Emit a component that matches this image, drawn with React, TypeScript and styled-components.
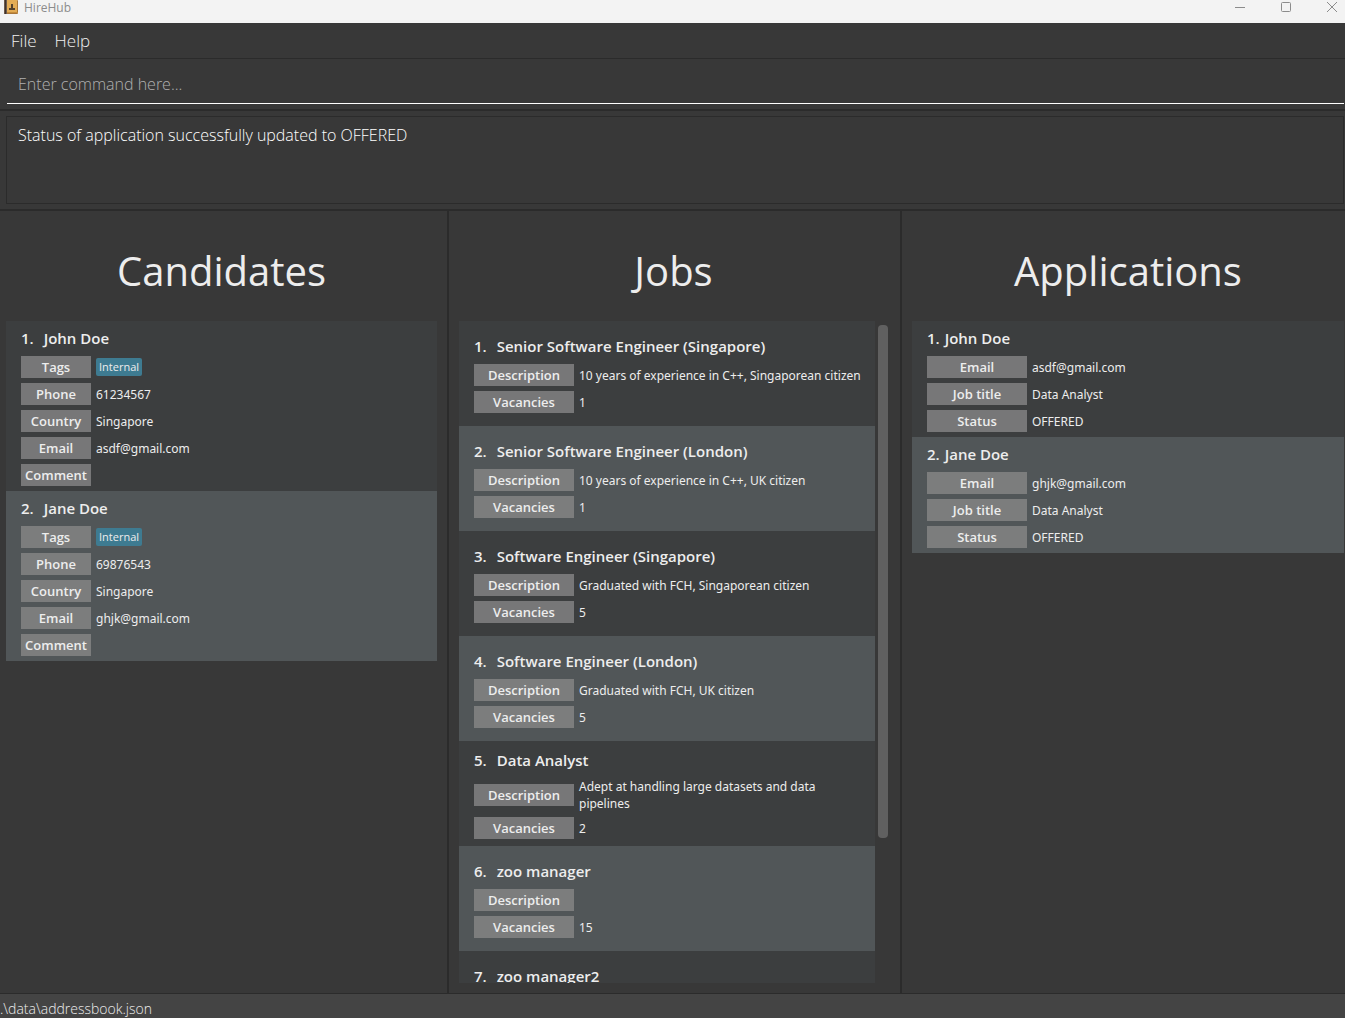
import React from "react";
import styled, { createGlobalStyle } from "styled-components";

const GlobalStyle = createGlobalStyle`
  *, *::before, *::after { box-sizing: border-box; }
  body { margin: 0; background: #383838; }
  button, input, textarea { font-family: inherit; }
`;

const Shell = styled.div`
  display: flex;
  flex-direction: column;
  height: 100vh;
  background: #383838;
  color: #ededed;
  font-family: "Open Sans", "Noto Sans", sans-serif;
`;

const TitleBar = styled.header`
  display: flex;
  align-items: flex-start;
  gap: 5px;
  flex: none;
  height: 23px;
  padding-left: 4px;
  background: #f3f3f3;
  color: #8c8c8c;
`;

const AppName = styled.span`
  flex: 1;
  font-size: 12px;
  line-height: 16px;
`;

const WindowButton = styled.button`
  display: flex;
  justify-content: center;
  width: 46px;
  height: 14px;
  padding: 0;
  border: 0;
  background: none;
  color: #8c8c8c;

  &:last-child { margin-right: -10px; }
`;

const WindowControls = styled.div`
  display: flex;
  overflow: hidden;
`;

const MenuBar = styled.nav`
  display: flex;
  flex: none;
  height: 36px;
  padding: 0 2px;
  border-bottom: 1px solid #2b2b2b;
`;

const MenuButton = styled.button`
  padding: 0 9px;
  border: 0;
  background: none;
  color: #f0f0f0;
  font-size: 17px;
  font-weight: 300;
  line-height: 35px;
`;

const CommandArea = styled.form`
  flex: none;
  padding: 6px 1px 5px 7px;
  border-bottom: 2px solid #2b2b2b;
`;

const CommandInput = styled.input`
  display: block;
  width: 100%;
  height: 39px;
  padding: 0 11px 1px;
  border: 0;
  border-bottom: 1px solid #ffffff;
  outline: 0;
  background: transparent;
  color: #ffffff;
  font-size: 16px;
  font-weight: 300;

  &::placeholder { color: #b0b0b0; opacity: 1; }
`;

const ResultArea = styled.section`
  flex: none;
  padding: 5px 1px 5px 6px;
  border-bottom: 2px solid #2b2b2b;
`;

const ResultText = styled.textarea`
  display: block;
  width: 100%;
  height: 88px;
  padding: 6px 11px;
  border: 1px solid #2b2b2b;
  outline: 0;
  resize: none;
  background: transparent;
  color: #ffffff;
  font-size: 16px;
  font-weight: 300;
  line-height: 24px;
`;

const Columns = styled.main`
  display: grid;
  grid-template-columns: 449fr 453fr 443fr;
  flex: 1;
  min-height: 0;
`;

const Column = styled.section<{ $inset: string }>`
  display: flex;
  flex-direction: column;
  min-width: 0;
  min-height: 0;
  padding: ${(p) => p.$inset};
  border-right: 2px solid #2b2b2b;

  &:last-child { border-right: 0; }
`;

const ColumnTitle = styled.h1`
  flex: none;
  margin: 0;
  height: 110px;
  font-size: 40px;
  font-weight: 400;
  line-height: 120px;
  text-align: center;
`;

const ScrollPane = styled.div`
  display: flex;
  gap: 3px;
  flex: 1;
  min-height: 0;
`;

const CardList = styled.ul`
  flex: 1;
  min-width: 0;
  margin: 0;
  padding: 0;
  overflow: hidden;
  list-style: none;
`;

const ScrollTrack = styled.div`
  width: 10px;
  padding-top: 4px;
`;

const ScrollThumb = styled.div`
  height: 78%;
  border-radius: 4px;
  background: #606060;
`;

const Card = styled.li<{ $minHeight: number }>`
  display: flex;
  flex-direction: column;
  justify-content: center;
  min-height: ${(p) => p.$minHeight}px;
  padding: 0 10px 0 15px;
  background: #3c3e3f;

  &:nth-child(even) { background: #515658; }
`;

const CardTitle = styled.h2<{ $gap: number }>`
  display: flex;
  gap: ${(p) => p.$gap}px;
  margin: 0;
  font-size: 15px;
  font-weight: 600;
  line-height: 35px;
`;

const Fields = styled.dl`
  display: flex;
  flex-direction: column;
  gap: 5px;
  margin: 0;
  padding-bottom: 5px;
`;

const FieldRow = styled.div`
  display: flex;
  align-items: center;
  gap: 5px;
  min-height: 22px;
`;

const FieldLabel = styled.dt<{ $width: number }>`
  flex: none;
  width: ${(p) => p.$width}px;
  background: rgba(136, 136, 136, 0.78);
  font-size: 13px;
  font-weight: 600;
  line-height: 22px;
  text-align: center;
`;

const FieldValue = styled.dd`
  margin: 0;
  font-family: "Noto Sans", "Open Sans", sans-serif;
  font-size: 12px;
  line-height: 17px;
`;

const Tag = styled.span`
  display: block;
  padding: 0 3px;
  border-radius: 2px;
  background: #3e7b91;
  font-family: "Open Sans", "Noto Sans", sans-serif;
  font-size: 11px;
  line-height: 18px;
`;

const StatusBar = styled.footer`
  flex: none;
  height: 25px;
  border-top: 1px solid #2b2b2b;
  background: #444444;
  font-size: 14px;
  font-weight: 300;
  line-height: 30px;
  white-space: nowrap;
  overflow: hidden;
`;

type Entry = { name: string; fields: [string, string][] };

const candidates: Entry[] = [
  {
    name: "John Doe",
    fields: [
      ["Tags", "Internal"],
      ["Phone", "61234567"],
      ["Country", "Singapore"],
      ["Email", "asdf@gmail.com"],
      ["Comment", ""],
    ],
  },
  {
    name: "Jane Doe",
    fields: [
      ["Tags", "Internal"],
      ["Phone", "69876543"],
      ["Country", "Singapore"],
      ["Email", "ghjk@gmail.com"],
      ["Comment", ""],
    ],
  },
];

const job = (name: string, description: string, vacancies: string): Entry => ({
  name,
  fields: [
    ["Description", description],
    ["Vacancies", vacancies],
  ],
});

const jobs: Entry[] = [
  job("Senior Software Engineer (Singapore)", "10 years of experience in C++, Singaporean citizen", "1"),
  job("Senior Software Engineer (London)", "10 years of experience in C++, UK citizen", "1"),
  job("Software Engineer (Singapore)", "Graduated with FCH, Singaporean citizen", "5"),
  job("Software Engineer (London)", "Graduated with FCH, UK citizen", "5"),
  job("Data Analyst", "Adept at handling large datasets and data pipelines", "2"),
  job("zoo manager", "", "15"),
  job("zoo manager2", "", ""),
];

const application = (name: string, email: string): Entry => ({
  name,
  fields: [
    ["Email", email],
    ["Job title", "Data Analyst"],
    ["Status", "OFFERED"],
  ],
});

const applications: Entry[] = [
  application("John Doe", "asdf@gmail.com"),
  application("Jane Doe", "ghjk@gmail.com"),
];

type CardsProps = {
  entries: Entry[];
  labelWidth: number;
  titleGap: number;
  minHeight?: number;
};

function Cards({ entries, labelWidth, titleGap, minHeight = 0 }: CardsProps) {
  return (
    <CardList>
      {entries.map((entry, i) => (
        <Card key={entry.name} $minHeight={minHeight}>
          <CardTitle $gap={titleGap}>
            <span>{i + 1}.</span>
            <span>{entry.name}</span>
          </CardTitle>
          <Fields>
            {entry.fields.map(([label, value]) => (
              <FieldRow key={label}>
                <FieldLabel $width={labelWidth}>{label}</FieldLabel>
                <FieldValue>{label === "Tags" ? <Tag>{value}</Tag> : value}</FieldValue>
              </FieldRow>
            ))}
          </Fields>
        </Card>
      ))}
    </CardList>
  );
}

function BookIcon() {
  return (
    <svg width="15" height="14" viewBox="0 0 15 14" aria-hidden="true">
      <rect x="0" y="0" width="14" height="14" rx="1" fill="#a8763a" />
      <rect x="0" y="0" width="3" height="14" fill="#6b5a4c" />
      <rect x="1" y="0" width="1" height="14" fill="#3f322d" />
      <rect x="3" y="0" width="10" height="12" fill="#e3ac55" />
      <rect x="3" y="12" width="11" height="1" fill="#c58c3c" />
      <path d="M7 4h2v4h2v2H5V8h2z" fill="#54422c" />
    </svg>
  );
}

export default function App() {
  return (
    <Shell>
      <GlobalStyle />
      <TitleBar>
        <BookIcon />
        <AppName>HireHub</AppName>
        <WindowControls>
          <WindowButton aria-label="Minimize">
            <svg width="10" height="14" viewBox="0 0 10 14" stroke="currentColor">
              <path d="M0 7.5h10" />
            </svg>
          </WindowButton>
          <WindowButton aria-label="Maximize">
            <svg width="10" height="14" viewBox="0 0 10 14" stroke="currentColor" fill="none">
              <rect x="0.5" y="2.5" width="9" height="9" rx="1" />
            </svg>
          </WindowButton>
          <WindowButton aria-label="Close">
            <svg width="10" height="14" viewBox="0 0 10 14" stroke="currentColor">
              <path d="M0 2l10 10M10 2L0 12" />
            </svg>
          </WindowButton>
        </WindowControls>
      </TitleBar>
      <MenuBar>
        <MenuButton>File</MenuButton>
        <MenuButton>Help</MenuButton>
      </MenuBar>
      <CommandArea onSubmit={(e) => e.preventDefault()}>
        <CommandInput aria-label="Command" placeholder="Enter command here..." />
      </CommandArea>
      <ResultArea>
        <ResultText
          aria-label="Result"
          readOnly
          value="Status of application successfully updated to OFFERED"
        />
      </ResultArea>
      <Columns>
        <Column $inset="0 10px 10px 6px">
          <ColumnTitle>Candidates</ColumnTitle>
          <Cards entries={candidates} labelWidth={70} titleGap={10} />
        </Column>
        <Column $inset="0 12px 10px 10px">
          <ColumnTitle>Jobs</ColumnTitle>
          <ScrollPane>
            <Cards entries={jobs} labelWidth={100} titleGap={10} minHeight={105} />
            <ScrollTrack>
              <ScrollThumb />
            </ScrollTrack>
          </ScrollPane>
        </Column>
        <Column $inset="0 1px 10px 10px">
          <ColumnTitle>Applications</ColumnTitle>
          <Cards entries={applications} labelWidth={100} titleGap={5} />
        </Column>
      </Columns>
      <StatusBar>.\data\addressbook.json</StatusBar>
    </Shell>
  );
}
